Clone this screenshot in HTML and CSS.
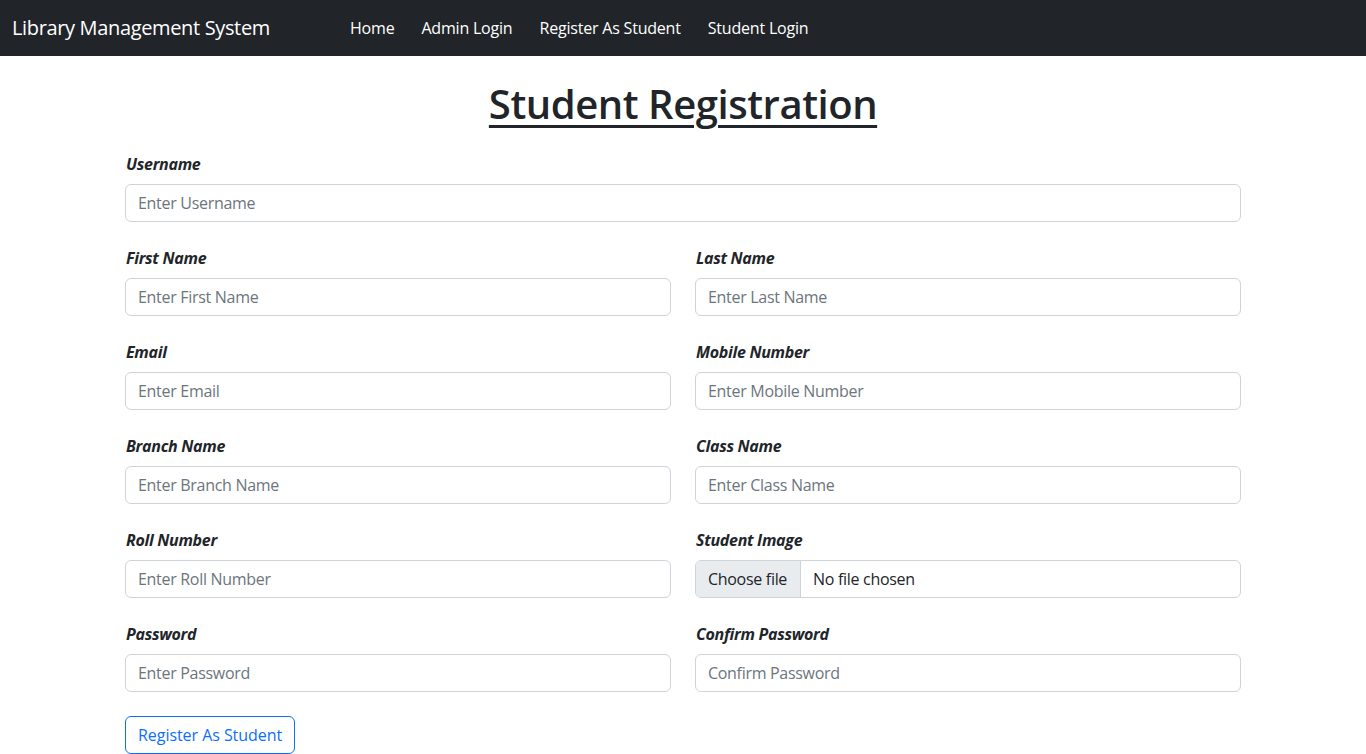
FILE: index.html
```html
<!DOCTYPE html>
<html lang="en">
<head>
<meta charset="utf-8">
<title>Student Registration</title>
<link rel="stylesheet" href="styles.css">
</head>
<body>
<nav class="navbar">
  <a class="brand" href="#">Library Management System</a>
  <ul class="nav">
    <li><a class="nav-link" href="#">Home</a></li>
    <li><a class="nav-link" href="#">Admin Login</a></li>
    <li><a class="nav-link" href="#">Register As Student</a></li>
    <li><a class="nav-link" href="#">Student Login</a></li>
  </ul>
</nav>
<main class="container">
  <h1 class="title">Student Registration</h1>
  <form class="form">
    <div class="field full">
      <label class="form-label">Username</label>
      <input class="form-control" type="text" placeholder="Enter Username">
    </div>
    <div class="field">
      <label class="form-label">First Name</label>
      <input class="form-control" type="text" placeholder="Enter First Name">
    </div>
    <div class="field">
      <label class="form-label">Last Name</label>
      <input class="form-control" type="text" placeholder="Enter Last Name">
    </div>
    <div class="field">
      <label class="form-label">Email</label>
      <input class="form-control" type="text" placeholder="Enter Email">
    </div>
    <div class="field">
      <label class="form-label">Mobile Number</label>
      <input class="form-control" type="text" placeholder="Enter Mobile Number">
    </div>
    <div class="field">
      <label class="form-label">Branch Name</label>
      <input class="form-control" type="text" placeholder="Enter Branch Name">
    </div>
    <div class="field">
      <label class="form-label">Class Name</label>
      <input class="form-control" type="text" placeholder="Enter Class Name">
    </div>
    <div class="field">
      <label class="form-label">Roll Number</label>
      <input class="form-control" type="text" placeholder="Enter Roll Number">
    </div>
    <div class="field">
      <label class="form-label">Student Image</label>
      <div class="file-control">
        <span class="file-btn">Choose file</span>
        <span class="file-name">No file chosen</span>
      </div>
    </div>
    <div class="field">
      <label class="form-label">Password</label>
      <input class="form-control" type="password" placeholder="Enter Password">
    </div>
    <div class="field">
      <label class="form-label">Confirm Password</label>
      <input class="form-control" type="password" placeholder="Confirm Password">
    </div>
    <div class="field full">
      <button class="btn-outline" type="button">Register As Student</button>
    </div>
  </form>
</main>
</body>
</html>
```

FILE: styles.css
```css
* { box-sizing: border-box; }
html, body { margin: 0; padding: 0; }
body {
  font-family: "Open Sans", "Noto Sans", sans-serif;
  font-size: 16px;
  line-height: 1.5;
  color: #212529;
  background: #fff;
  overflow: hidden;
}
.navbar {
  display: flex;
  align-items: center;
  height: 56px;
  padding: 0 12px;
  background: #212529;
}
.brand {
  font-size: 20px;
  line-height: 30px;
  color: #fff;
  text-decoration: none;
  width: 330px;
  letter-spacing: -0.35px;
}
.nav {
  display: flex;
  gap: 11px;
  list-style: none;
  margin: 0;
  padding: 0;
}
.nav-link {
  display: block;
  padding: 8px;
  color: #fff;
  text-decoration: none;
  letter-spacing: -0.2px;
}
.container {
  width: 1140px;
  margin: 0 auto;
  padding: 0 12px;
}
.title {
  margin: 24px 0 24px;
  text-align: center;
  font-size: 40px;
  line-height: 48px;
  font-weight: 600;
  text-decoration: underline;
  text-decoration-thickness: 3px;
  text-underline-offset: 6px;
  letter-spacing: -0.45px;
}
.form {
  display: grid;
  grid-template-columns: 1fr 1fr;
  column-gap: 24px;
  row-gap: 24px;
}
.field.full { grid-column: 1 / -1; }
.form-label {
  display: block;
  margin-bottom: 8px;
  padding-left: 1px;
  font-weight: 700;
  font-style: italic;
  line-height: 24px;
  letter-spacing: -0.3px;
}
.form-control {
  display: block;
  width: 100%;
  height: 38px;
  padding: 6px 12px;
  font-family: inherit;
  font-size: 16px;
  color: #212529;
  border: 1px solid #ced4da;
  border-radius: 6px;
  letter-spacing: -0.3px;
}
.form-control::placeholder { color: #6c757d; opacity: 1; }
.file-control {
  display: flex;
  height: 38px;
  border: 1px solid #ced4da;
  border-radius: 6px;
  overflow: hidden;
  letter-spacing: -0.3px;
}
.file-btn {
  display: flex;
  align-items: center;
  padding: 0 13px 0 12px;
  background: #e9ecef;
  border-right: 1px solid #ced4da;
}
.file-name {
  display: flex;
  align-items: center;
  padding: 0 12px;
}
.btn-outline {
  height: 38px;
  padding: 6px 12px;
  font-family: inherit;
  font-size: 16px;
  color: #0d6efd;
  background: #fff;
  border: 1px solid #0d6efd;
  border-radius: 6px;
  letter-spacing: -0.05px;
}
```
